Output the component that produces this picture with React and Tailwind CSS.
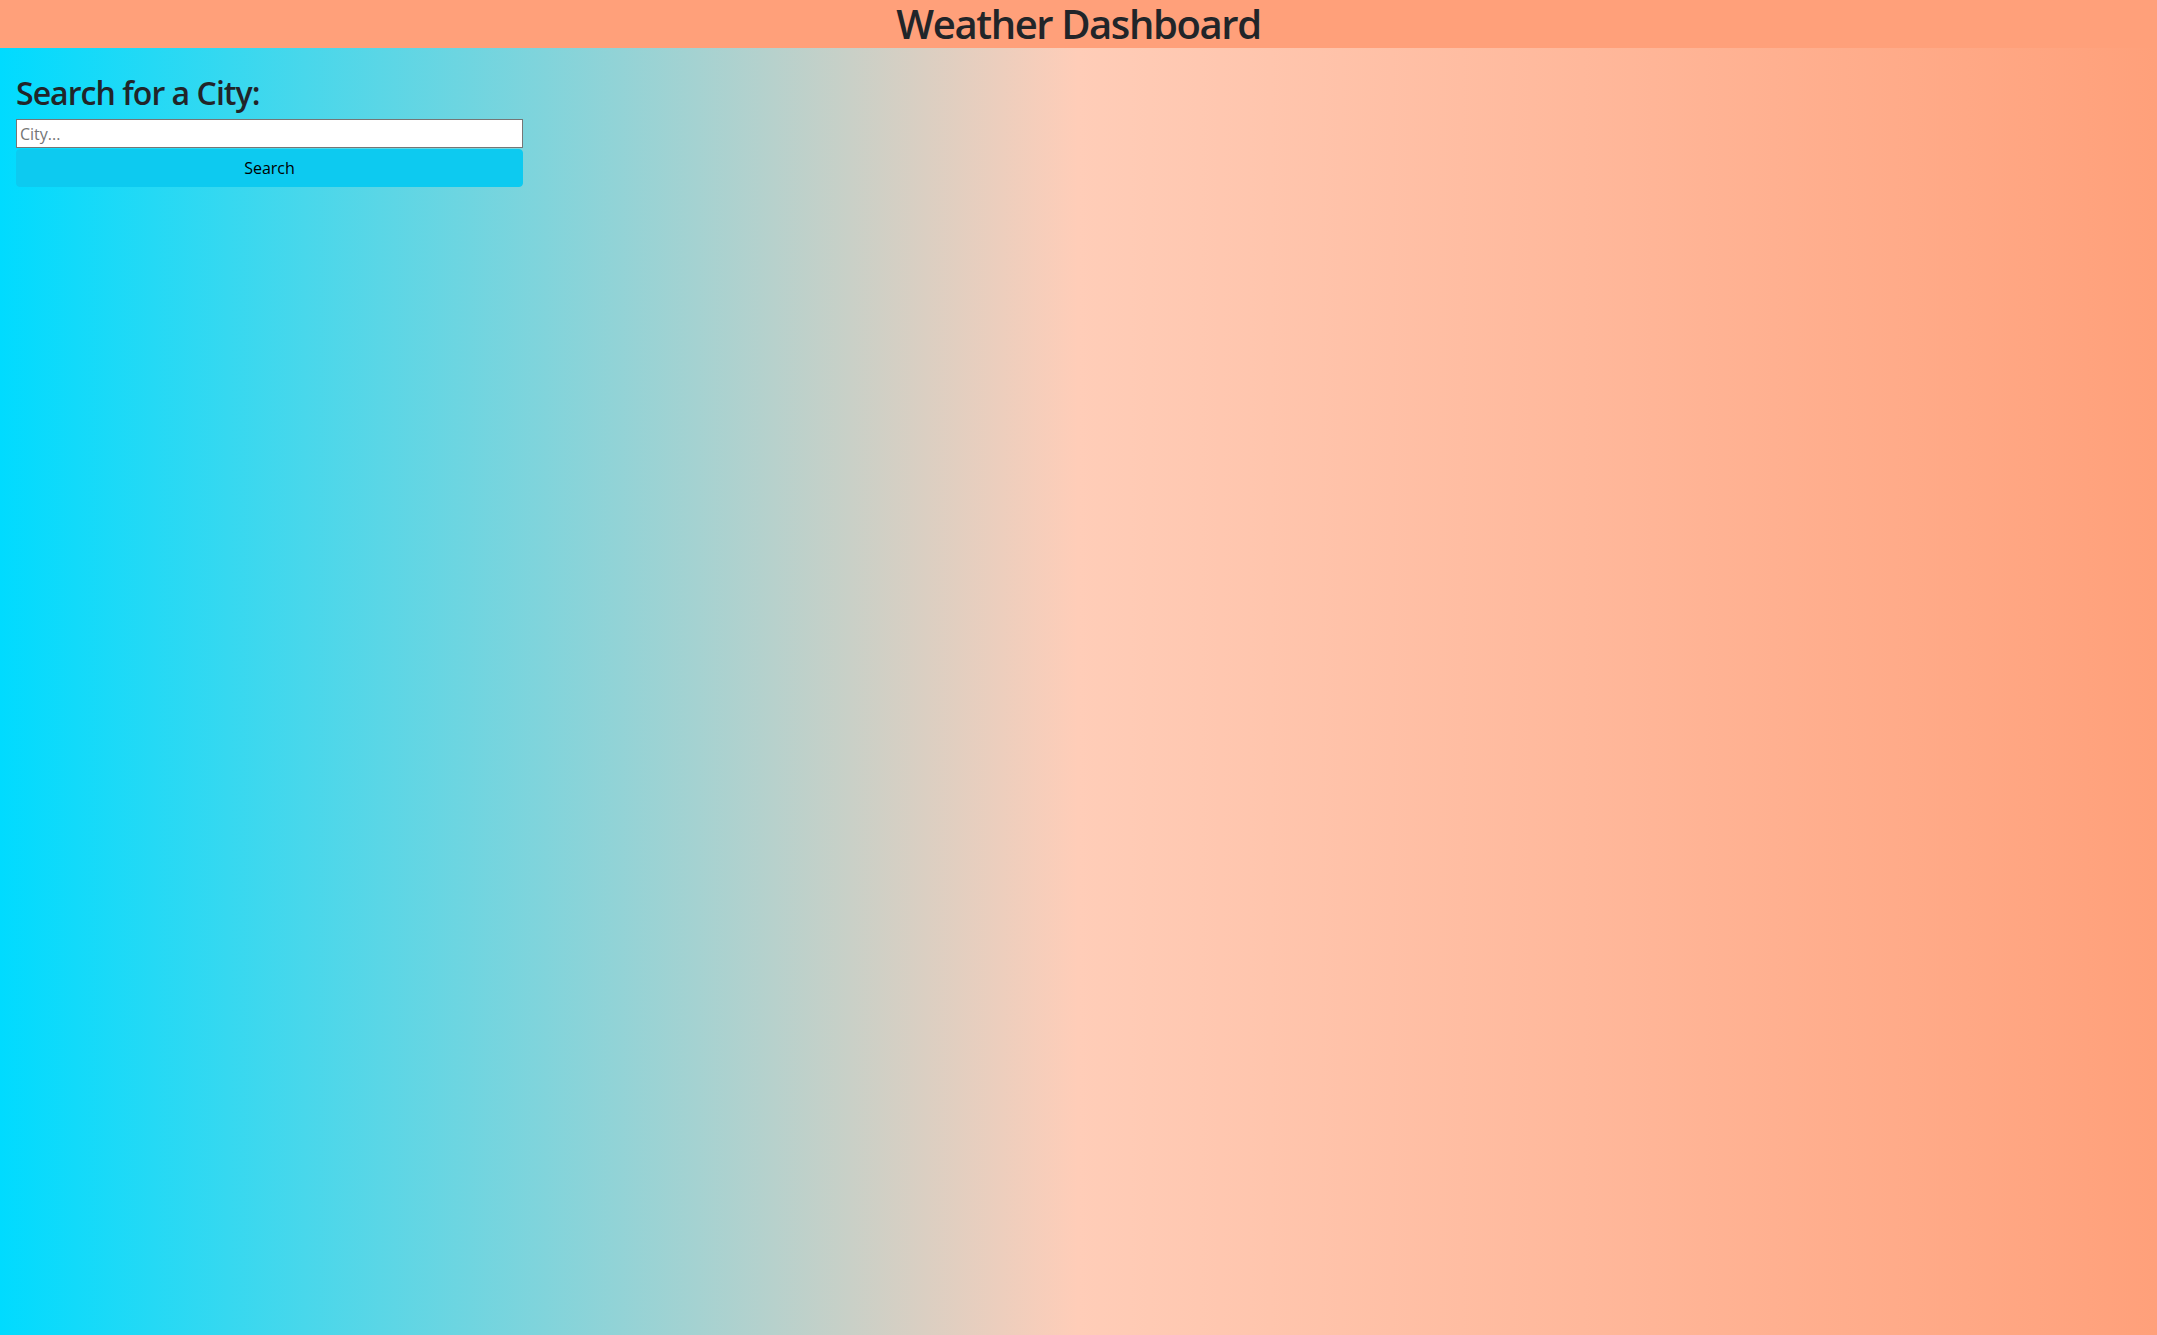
export default function App() {
  return (
    <div
      className="min-h-screen w-full bg-[linear-gradient(to_right,#00dbff_0%,#ffcdb8_50%,#ffa07a_100%)] text-[#212529]"
      style={{ fontFamily: '"Open Sans", "Noto Sans", sans-serif' }}
    >
      <header className="flex h-[48px] items-center justify-center bg-[#ffa07a]">
        <h1 className="text-[40px] font-semibold leading-[1.2] tracking-[-0.035em]">Weather Dashboard</h1>
      </header>
      <main className="px-[16px] pt-[26px]">
        <div className="flex w-[507px] flex-col">
          <h2 className="mb-[7px] text-[32px] font-semibold leading-[1.2] tracking-[-0.03em]">Search for a City:</h2>
          <input
            type="text"
            placeholder="City..."
            className="h-[29px] w-full border border-[#767676] bg-white px-[3px] text-[16px] text-black placeholder:text-[#757575]"
          />
          <button className="mt-[1px] h-[38px] w-full rounded-[4px] border border-[#0dcaf0] bg-[#0dcaf0] text-[16px] text-black">
            Search
          </button>
        </div>
      </main>
    </div>
  );
}
